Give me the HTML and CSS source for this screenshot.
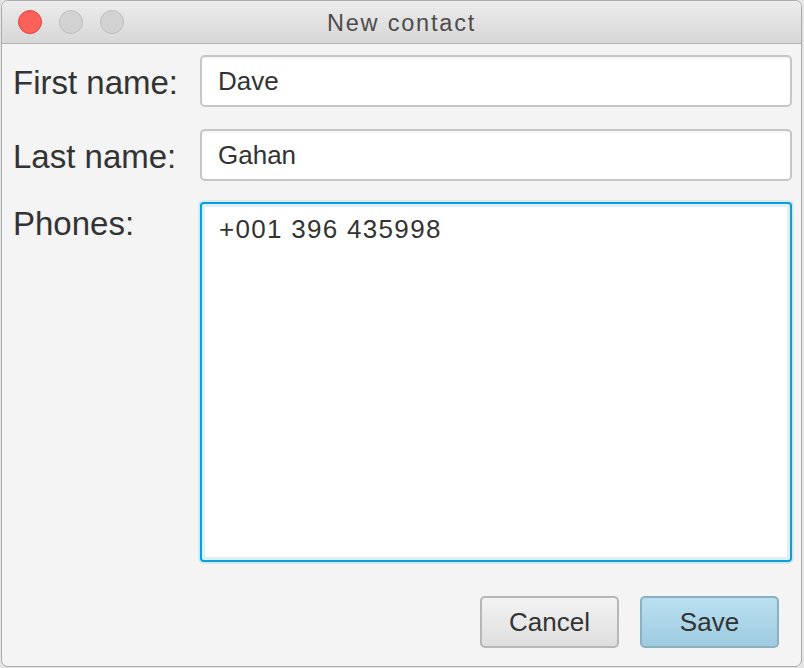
FILE: index.html
```html
<!DOCTYPE html>
<html>
<head>
<meta charset="utf-8">
<link rel="stylesheet" href="styles.css">
</head>
<body>
<div class="window">
  <div class="titlebar">
    <div class="lights">
      <span class="light close"></span>
      <span class="light"></span>
      <span class="light"></span>
    </div>
    <div class="title">New contact</div>
    <div class="spacer"></div>
  </div>
  <div class="content">
    <div class="form">
      <div class="label">First name:</div>
      <div class="field">Dave</div>
      <div class="label">Last name:</div>
      <div class="field">Gahan</div>
      <div class="label label-top">Phones:</div>
      <div class="area">+001 396 435998</div>
    </div>
    <div class="buttons">
      <div class="btn cancel">Cancel</div>
      <div class="btn save">Save</div>
    </div>
  </div>
</div>
</body>
</html>
```

FILE: styles.css
```css
html, body {
  margin: 0;
  padding: 0;
  background: #e4e4e4;
}
body {
  width: 804px;
  height: 668px;
  overflow: hidden;
  font-family: "Liberation Sans", Arial, sans-serif;
  color: #333;
}
.window {
  margin-left: 1px;
  width: 801px;
  height: 667px;
  box-sizing: border-box;
  border: 1px solid #ababab;
  border-radius: 7px;
  background: #f4f4f4;
  overflow: hidden;
  display: flex;
  flex-direction: column;
}
.titlebar {
  height: 42px;
  flex: none;
  display: grid;
  grid-template-columns: 1fr auto 1fr;
  align-items: center;
  background: linear-gradient(#ececec, #d7d7d7);
  border-bottom: 1px solid #b4b4b4;
}
.lights {
  display: flex;
  gap: 17px;
  padding-left: 16px;
  align-items: center;
}
.light {
  width: 22px;
  height: 22px;
  border-radius: 50%;
  background: #d2d2d2;
  border: 1px solid #bdbdbd;
}
.light.close {
  background: #fc605b;
  border-color: #e0443e;
}
.title {
  font-size: 23.5px;
  letter-spacing: 1.8px;
  color: #4c4c4c;
  line-height: 39px;
  padding-top: 3px;
  height: 42px;
  box-sizing: border-box;
}
.content {
  flex: 1;
  display: flex;
  flex-direction: column;
  padding: 11px 8px 0 11px;
}
.form {
  display: grid;
  grid-template-columns: 187px 592px;
  grid-template-rows: 52px 52px 360px;
  row-gap: 22px;
}
.label {
  font-size: 33px;
  line-height: 52px;
  padding-top: 2px;
  color: #333;
  white-space: nowrap;
}
.label.label-top {
  line-height: 33px;
  padding-top: 4px;
}
.field {
  box-sizing: border-box;
  height: 52px;
  border: 2px solid #c6c6c6;
  border-radius: 5px;
  background: #fff;
  box-shadow: inset 0 2px 2px rgba(0,0,0,0.04);
  font-size: 26px;
  line-height: 48px;
  padding-left: 16px;
  color: #333;
}
.area {
  box-sizing: border-box;
  margin-top: -1px;
  height: 360px;
  border: 2px solid #0b9ed6;
  border-radius: 4px;
  background: #fff;
  box-shadow: inset 0 0 0 3px #dcf0fa, 0 0 0 2px #d3e9f4;
  font-size: 26px;
  letter-spacing: 1.3px;
  line-height: 31px;
  padding: 10px 17px;
  color: #333;
}
.buttons {
  display: flex;
  justify-content: flex-end;
  gap: 21px;
  padding-top: 33px;
  padding-right: 14px;
}
.btn {
  box-sizing: border-box;
  width: 139px;
  height: 52px;
  border-radius: 5px;
  border: 2px solid #b6b6b6;
  font-size: 26px;
  line-height: 48px;
  text-align: center;
  color: #333;
}
.cancel {
  background: linear-gradient(#f3f3f3, #dedede);
}
.save {
  border-color: #8cb0c2;
  background: linear-gradient(#b9e0f1, #9ecbe0);
}
```
